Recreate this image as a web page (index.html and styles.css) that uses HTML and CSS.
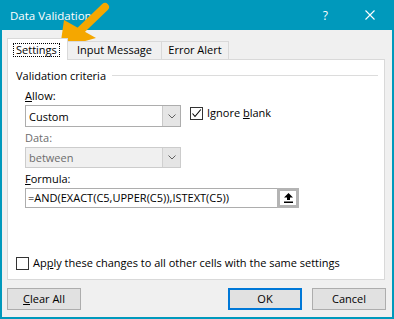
FILE: index.html
```html
<!DOCTYPE html>
<html lang="en">
<head>
    <meta charset="UTF-8">
    <title>Data Validation</title>
    <link rel="stylesheet" href="styles.css">
</head>
<body>

<div class="window">
    <div class="titlebar">
        <span class="title">Data Validation</span>
        <span class="help">?</span>
        <svg class="close" width="10" height="10" viewBox="0 0 10 10">
            <path d="M0.5 0.5 L9.5 9.5 M9.5 0.5 L0.5 9.5" stroke="#fff" stroke-width="1.1" fill="none"/>
        </svg>
    </div>

    <div class="body">
        <div class="tabs">
            <div class="tab tab-settings active"><span class="focus">Settings</span></div>
            <div class="tab tab-input">Input Message</div>
            <div class="tab tab-error">Error Alert</div>
        </div>

        <div class="panel">
            <div class="group-title">
                <span>Validation criteria</span>
                <div class="rule"></div>
            </div>

            <div class="fields">
                <div class="lbl"><u>A</u>llow:</div>
                <div class="row">
                    <div class="select">
                        <span class="value">Custom</span>
                        <div class="drop">
                            <svg width="8" height="5" viewBox="0 0 8 5"><path d="M0.5 0.5 L4 4 L7.5 0.5" stroke="#606060" fill="none"/></svg>
                        </div>
                    </div>
                    <div class="check-row">
                        <span class="checkbox">
                            <svg width="11" height="11" viewBox="0 0 11 11"><path d="M1.5 5.5 L4 8.5 L9.8 1.5" stroke="#000" stroke-width="1.1" fill="none"/></svg>
                        </span>
                        <span>Ignore <u>b</u>lank</span>
                    </div>
                </div>

                <div class="lbl disabled">Data:</div>
                <div class="select disabled">
                    <span class="value">between</span>
                    <div class="drop">
                        <svg width="8" height="5" viewBox="0 0 8 5"><path d="M0.5 0.5 L4 4 L7.5 0.5" stroke="#606060" fill="none"/></svg>
                    </div>
                </div>

                <div class="lbl"><u>F</u>ormula:</div>
                <div class="formula">
                    <div class="formula-text">=AND(EXACT(C5,UPPER(C5)),ISTEXT(C5))</div>
                    <div class="ref-btn">
                        <svg width="9" height="10" viewBox="0 0 9 10">
                            <path d="M4.5 0 L9 4.5 L6 4.5 L6 7 L3 7 L3 4.5 L0 4.5 Z" fill="#000"/>
                            <rect x="0" y="8.5" width="9" height="1.5" fill="#000"/>
                        </svg>
                    </div>
                </div>
            </div>

            <div class="apply">
                <span class="checkbox"></span>
                <span>Ap<u>p</u>ly these changes to all other cells with the same settings</span>
            </div>
        </div>

        <div class="buttons">
            <div class="btn"><u>C</u>lear All</div>
            <div class="btn btn-ok">OK</div>
            <div class="btn">Cancel</div>
        </div>
    </div>

    <!-- callout arrow pointing at the Settings tab -->
    <svg class="pointer" width="120" height="60" viewBox="0 0 120 60">
        <line x1="105" y1="7" x2="80" y2="31" stroke="#f5a700" stroke-width="8" stroke-linecap="round"/>
        <polygon points="60,48 64,20 96,38" fill="#f5a700"/>
    </svg>
</div>

</body>
</html>
```

FILE: styles.css
```css
* {
    box-sizing: border-box;
}
body {
    margin: 0;
    font-family: "Open Sans", "Noto Sans", sans-serif;
    font-size: 11px;
    color: #000;
}
.window {
    position: relative;
    width: 394px;
    height: 319px;
    background-color: #0099bc;
    padding: 0 2px 2px 2px;
    display: flex;
    flex-direction: column;
}
.titlebar {
    height: 30px;
    display: flex;
    align-items: center;
    color: #fff;
    padding-left: 8px;
    padding-right: 17px;
}
.title {
    font-size: 11.5px;
}
.help {
    margin-left: auto;
    margin-right: 37px;
    font-size: 12px;
}
.body {
    flex: 1;
    background-color: #f0f0f0;
    padding: 8px 7px 7px 5px;
    display: flex;
    flex-direction: column;
}
.tabs {
    display: flex;
    align-items: flex-end;
    height: 22px;
    margin-bottom: -1px;
    position: relative;
    z-index: 1;
}
.tab {
    height: 18px;
    margin-bottom: 1px;
    border: 1px solid #d9d9d9;
    border-bottom: none;
    background-color: #f0f0f0;
    line-height: 16px;
    text-align: center;
    margin-left: -1px;
}
.tab-settings {
    width: 61px;
    margin-left: 0;
}
.tab-input {
    width: 95px;
}
.tab-error {
    width: 68px;
}
.tab.active {
    height: 22px;
    margin-bottom: 0;
    background-color: #fff;
    padding: 3px 0 0 5px;
    text-align: left;
    position: relative;
    z-index: 2;
}
.focus {
    display: inline-block;
    border: 1px dotted #000;
    padding: 0 2px;
    line-height: 12px;
}
.panel {
    flex: 1;
    background-color: #fff;
    border: 1px solid #d9d9d9;
    padding: 8px 6px 8px 8px;
    display: flex;
    flex-direction: column;
}
.group-title {
    display: flex;
    align-items: center;
    line-height: 16px;
}
.rule {
    flex: 1;
    height: 1px;
    background-color: #dcdcdc;
    margin-left: 6px;
    margin-top: -1px;
}
.fields {
    padding-left: 9px;
}
.lbl {
    line-height: 16px;
    margin-top: 3px;
}
.fields .lbl:first-child {
    margin-top: 4px;
}
.lbl.disabled {
    color: #6d6d6d;
}
.row {
    display: flex;
    margin-top: 1px;
}
.select {
    width: 156px;
    height: 22px;
    border: 1px solid #adadad;
    background-color: #fff;
    display: flex;
    align-items: center;
}
.select.disabled {
    height: 21px;
    margin-top: 1px;
    border-color: #cccccc;
    background-color: #f0f0f0;
    color: #6d6d6d;
}
.value {
    flex: 1;
    padding-left: 3px;
}
.drop {
    width: 18px;
    height: 100%;
    background-color: #e5e5e5;
    border-left: 1px solid #c9c9c9;
    display: flex;
    align-items: center;
    justify-content: center;
}
.select.disabled .drop {
    border-left-color: #d0d0d0;
}
.check-row {
    display: flex;
    align-items: center;
    margin-left: 9px;
    margin-top: 0;
    height: 16px;
    line-height: 16px;
    align-self: flex-start;
}
.checkbox {
    width: 13px;
    height: 13px;
    border: 1px solid #333;
    background-color: #fff;
    margin-right: 4px;
    display: flex;
    align-items: center;
    justify-content: center;
}
.formula {
    display: flex;
    width: 274px;
    height: 20px;
    margin-top: 1px;
}
.formula-text {
    flex: 1;
    border: 1px solid #adadad;
    border-right: none;
    padding-left: 2px;
    line-height: 18px;
    white-space: nowrap;
    overflow: hidden;
}
.ref-btn {
    width: 22px;
    height: 20px;
    border: 3px solid #b4b4b4;
    background-color: #fff;
    display: flex;
    align-items: center;
    justify-content: center;
}
.apply {
    margin-top: auto;
    display: flex;
    align-items: center;
    line-height: 16px;
}
.buttons {
    display: flex;
    margin-top: 8px;
    margin-right: -1px;
    gap: 10px;
}
.btn {
    width: 74px;
    height: 22px;
    background-color: #e1e1e1;
    border: 1px solid #adadad;
    text-align: center;
    line-height: 20px;
}
.btn-ok {
    margin-left: auto;
    border: 2px solid #0078d7;
    line-height: 18px;
}
.pointer {
    position: absolute;
    left: 0;
    top: 0;
}
```
